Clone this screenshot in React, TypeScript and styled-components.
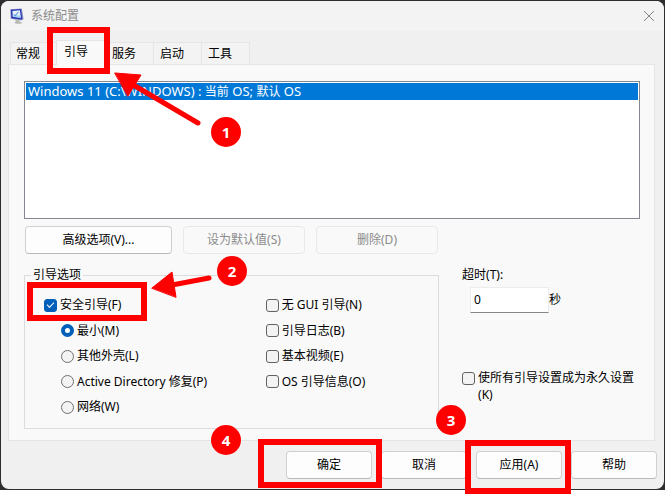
import React from "react";
import styled, { createGlobalStyle, css } from "styled-components";

const red = "#fe0000";
const accent = "#005fb8";

const GlobalStyle = createGlobalStyle`
  *, *::before, *::after { box-sizing: border-box; }
  body {
    margin: 0;
    min-height: 100vh;
    background: #fff;
    color: #000;
    font: 12px/16px "Noto Sans", "Noto Sans CJK SC", sans-serif;
  }
  button, input { font: inherit; color: inherit; }
`;

const Desktop = styled.div`
  position: relative;
  padding: 1px;
  background: #2f2d30;
`;

const Window = styled.main`
  display: flex;
  flex-direction: column;
  overflow: hidden;
  border-radius: 8px;
  background: #f0f0f0;
`;

const TitleBar = styled.header`
  display: flex;
  align-items: center;
  gap: 6px;
  height: 30px;
  padding: 0 9px 0 8px;
  background: #f3f3f3;
  color: #8c8c8c;
`;

const Title = styled.h1`
  flex: 1;
  margin: 0;
  font-size: 12px;
  font-weight: 400;
`;

const CloseButton = styled.button`
  display: grid;
  padding: 0;
  border: 0;
  background: none;
  color: #858585;
`;

const TabStrip = styled.div`
  display: flex;
  align-items: flex-end;
  margin: 9px 8px 0 9px;
`;

const Tab = styled.button<{ $active?: boolean }>`
  width: 48px;
  height: 22px;
  padding: 0 0 0 6px;
  border: 1px solid #e5e5e5;
  border-width: 1px 1px 0 0;
  background: #f3f3f3;
  text-align: left;
  &:first-child {
    padding-left: 5px;
    border-left-width: 1px;
  }
  ${(p) =>
    p.$active &&
    css`
      width: 52px;
      height: 25px;
      margin: 0 -2px -1px;
      padding: 0 0 2px 7px;
      border-left-width: 1px;
      background: #f9f9f9;
      z-index: 1;
    `}
`;

const Pane = styled.section`
  margin: 0 9px 0 7px;
  padding: 16px 14px 11px 15px;
  border: 1px solid #e5e5e5;
  background: #f9f9f9;
`;

const BootList = styled.ul`
  height: 138px;
  margin: 0;
  padding: 1px;
  border: 1px solid #828790;
  background: #fff;
  list-style: none;
`;

const BootEntry = styled.li`
  padding: 0 2px;
  background: #0078d7;
  color: #fff;
  font-size: 13px;
  line-height: 17px;
  white-space: nowrap;
`;

const Han = styled.span`
  font-size: 12px;
`;

const Actions = styled.div`
  display: flex;
  gap: 11px;
  margin: 7px 0 13px 1px;
`;

const Button = styled.button<{ $width: number }>`
  width: ${(p) => p.$width}px;
  height: 28px;
  padding: 0;
  border: 1px solid #d0d0d0;
  border-bottom-color: #b9b9b9;
  border-radius: 4px;
  background: #fdfdfd;
  &:disabled {
    border-color: #e8e8e8;
    background: #f9f9f9;
    color: #8b8b8b;
  }
`;

const Columns = styled.div`
  display: grid;
  grid-template-columns: 7fr 3fr;
  gap: 23px;
`;

const Group = styled.fieldset`
  min-width: 0;
  margin: 0;
  padding: 9px 0 8px 19px;
  border: 1px solid #dcdcdc;
`;

const Legend = styled.legend`
  margin-left: -13px;
  padding: 0 2px;
`;

const Options = styled.div`
  display: grid;
  grid-template-columns: 9fr 7fr;
  grid-template-rows: 26px 25px 26px 25px 26px;
  grid-auto-flow: column;
`;

const Choice = styled.label<{ $nested?: boolean; $multiline?: boolean }>`
  display: flex;
  align-items: center;
  gap: 3px;
  padding-left: ${(p) => (p.$nested ? 17 : 0)}px;
  ${(p) =>
    p.$multiline &&
    css`
      align-items: flex-start;
      line-height: 17px;
    `}
`;

const CheckBox = styled.input.attrs({ type: "checkbox" })`
  appearance: none;
  display: grid;
  place-items: center;
  flex: none;
  width: 13px;
  height: 13px;
  margin: 0;
  border: 1px solid #626262;
  border-radius: 3px;
  background: #f3f3f3;
  ${Choice}[data-multiline] & {
    margin-top: 3px;
  }
  &:checked {
    border-color: ${accent};
    background: ${accent};
  }
  &:checked::after {
    content: "";
    width: 7px;
    height: 4px;
    margin-bottom: 2px;
    border: solid #fff;
    border-width: 0 0 1px 1px;
    transform: rotate(-45deg);
  }
`;

const Radio = styled.input.attrs({ type: "radio" })`
  appearance: none;
  flex: none;
  width: 13px;
  height: 13px;
  margin: 0;
  border: 1px solid #707070;
  border-radius: 50%;
  background: #f3f3f3;
  &:checked {
    border: 4px solid ${accent};
    background: #fff;
  }
`;

const Side = styled.div`
  display: flex;
  flex-direction: column;
  gap: 4px;
`;

const TimeoutRow = styled.div`
  display: flex;
  align-items: center;
  margin: 0 0 52px 8px;
`;

const TimeoutInput = styled.input`
  width: 79px;
  height: 26px;
  padding: 0 3px 2px;
  border: 1px solid #ececec;
  border-bottom-color: #868686;
  background: #fff;
`;

const Footer = styled.footer`
  display: flex;
  justify-content: flex-end;
  gap: 9px;
  padding: 10px 7px;
`;

const Annotations = styled.div`
  position: absolute;
  inset: 0;
  z-index: 2;
  pointer-events: none;
`;

const Highlight = styled.div<{ $x: number; $y: number; $w: number; $h: number }>`
  position: absolute;
  left: ${(p) => p.$x}px;
  top: ${(p) => p.$y}px;
  width: ${(p) => p.$w}px;
  height: ${(p) => p.$h}px;
  border: 6px solid ${red};
`;

const Step = styled.span<{ $x: number; $y: number }>`
  position: absolute;
  left: ${(p) => p.$x}px;
  top: ${(p) => p.$y}px;
  width: 30px;
  height: 30px;
  border-radius: 50%;
  background: ${red};
  color: #fff;
  font: 700 15px/30px "Noto Sans", sans-serif;
  text-align: center;
`;

const Arrows = styled.svg`
  position: absolute;
  left: 0;
  top: 0;
`;

function AppIcon() {
  return (
    <svg width="16" height="16" viewBox="0 0 16 16" aria-hidden="true">
      <path d="M6 11.5l4.500 1 .5 1.500 2.500.6-1.500 1.200H7l-1.800-1.300 1.600-.8z" fill="#b9b9b4" />
      <path d="M1.300 1.200L12.800.4 14.600 11l-2.300 1.500L1.700 10.800z" fill="#8b92c4" />
      <path d="M1.900 1.700L12 .9l1.300 10.600-10.800-1.300z" fill="#2938b5" />
      <path d="M3.400 3L10.900 2.300l.9 7.500-7.900-1z" fill="#e6f3fb" />
      <path d="M3.700 6.500l7.800 1 .3 2.300-7.900-1z" fill="#a9d6f4" />
      <path d="M5.200 6.300l1.200 1.400 3.100-4" fill="none" stroke="#3f83c9" />
    </svg>
  );
}

const tabs = ["常规", "引导", "服务", "启动", "工具"];
const modes = ["最小(M)", "其他外壳(L)", "Active Directory 修复(P)", "网络(W)"];
const flags = ["无 GUI 引导(N)", "引导日志(B)", "基本视频(E)", "OS 引导信息(O)"];
const commands = ["确定", "取消", "应用(A)", "帮助"];

export default function App() {
  return (
    <>
      <GlobalStyle />
      <Desktop>
        <Window>
          <TitleBar>
            <AppIcon />
            <Title>系统配置</Title>
            <CloseButton aria-label="关闭">
              <svg width="12" height="12" viewBox="0 0 12 12" aria-hidden="true">
                <path d="M1 1l10 10M11 1L1 11" stroke="currentColor" />
              </svg>
            </CloseButton>
          </TitleBar>
          <TabStrip role="tablist">
            {tabs.map((name, i) => (
              <Tab key={name} role="tab" aria-selected={i === 1} $active={i === 1}>
                {name}
              </Tab>
            ))}
          </TabStrip>
          <Pane role="tabpanel" aria-label="引导">
            <BootList role="listbox" aria-label="引导">
              <BootEntry role="option" aria-selected>
                Windows 11 (C:\WINDOWS) : <Han>当前</Han> OS; <Han>默认</Han> OS
              </BootEntry>
            </BootList>
            <Actions>
              <Button $width={147}>高级选项(V)...</Button>
              <Button $width={122} disabled>设为默认值(S)</Button>
              <Button $width={122} disabled>删除(D)</Button>
            </Actions>
            <Columns>
              <Group>
                <Legend>引导选项</Legend>
                <Options>
                  <Choice>
                    <CheckBox defaultChecked />
                    安全引导(F)
                  </Choice>
                  {modes.map((name, i) => (
                    <Choice key={name} $nested>
                      <Radio name="mode" defaultChecked={i === 0} />
                      {name}
                    </Choice>
                  ))}
                  {flags.map((name) => (
                    <Choice key={name}>
                      <CheckBox />
                      {name}
                    </Choice>
                  ))}
                </Options>
              </Group>
              <Side>
                <label htmlFor="timeout">超时(T):</label>
                <TimeoutRow>
                  <TimeoutInput id="timeout" defaultValue="0" />
                  <span>秒</span>
                </TimeoutRow>
                <Choice $multiline data-multiline>
                  <CheckBox />
                  <span>使所有引导设置成为永久设置(K)</span>
                </Choice>
              </Side>
            </Columns>
          </Pane>
          <Footer>
            {commands.map((name) => (
              <Button key={name} $width={86}>{name}</Button>
            ))}
          </Footer>
        </Window>
        <Annotations>
          <Highlight $x={47} $y={27} $w={63} $h={47} />
          <Highlight $x={27} $y={282} $w={120} $h={39} />
          <Highlight $x={258} $y={439} $w={124} $h={49} />
          <Highlight $x={465} $y={440} $w={106} $h={54} />
          <Arrows width="240" height="310" viewBox="0 0 240 310" aria-hidden="true">
            <g fill={red} stroke={red} strokeLinecap="round" strokeLinejoin="round">
              <path d="M130 83L198 123" strokeWidth="5" />
              <path d="M115 73L141 75L128 96Z" />
              <path d="M172 285L209 278" strokeWidth="5" />
              <path d="M152 288L172 272L176 297Z" />
            </g>
          </Arrows>
          <Step $x={211} $y={117}>1</Step>
          <Step $x={217} $y={256}>2</Step>
          <Step $x={436} $y={405}>3</Step>
          <Step $x={211} $y={425}>4</Step>
        </Annotations>
      </Desktop>
    </>
  );
}
